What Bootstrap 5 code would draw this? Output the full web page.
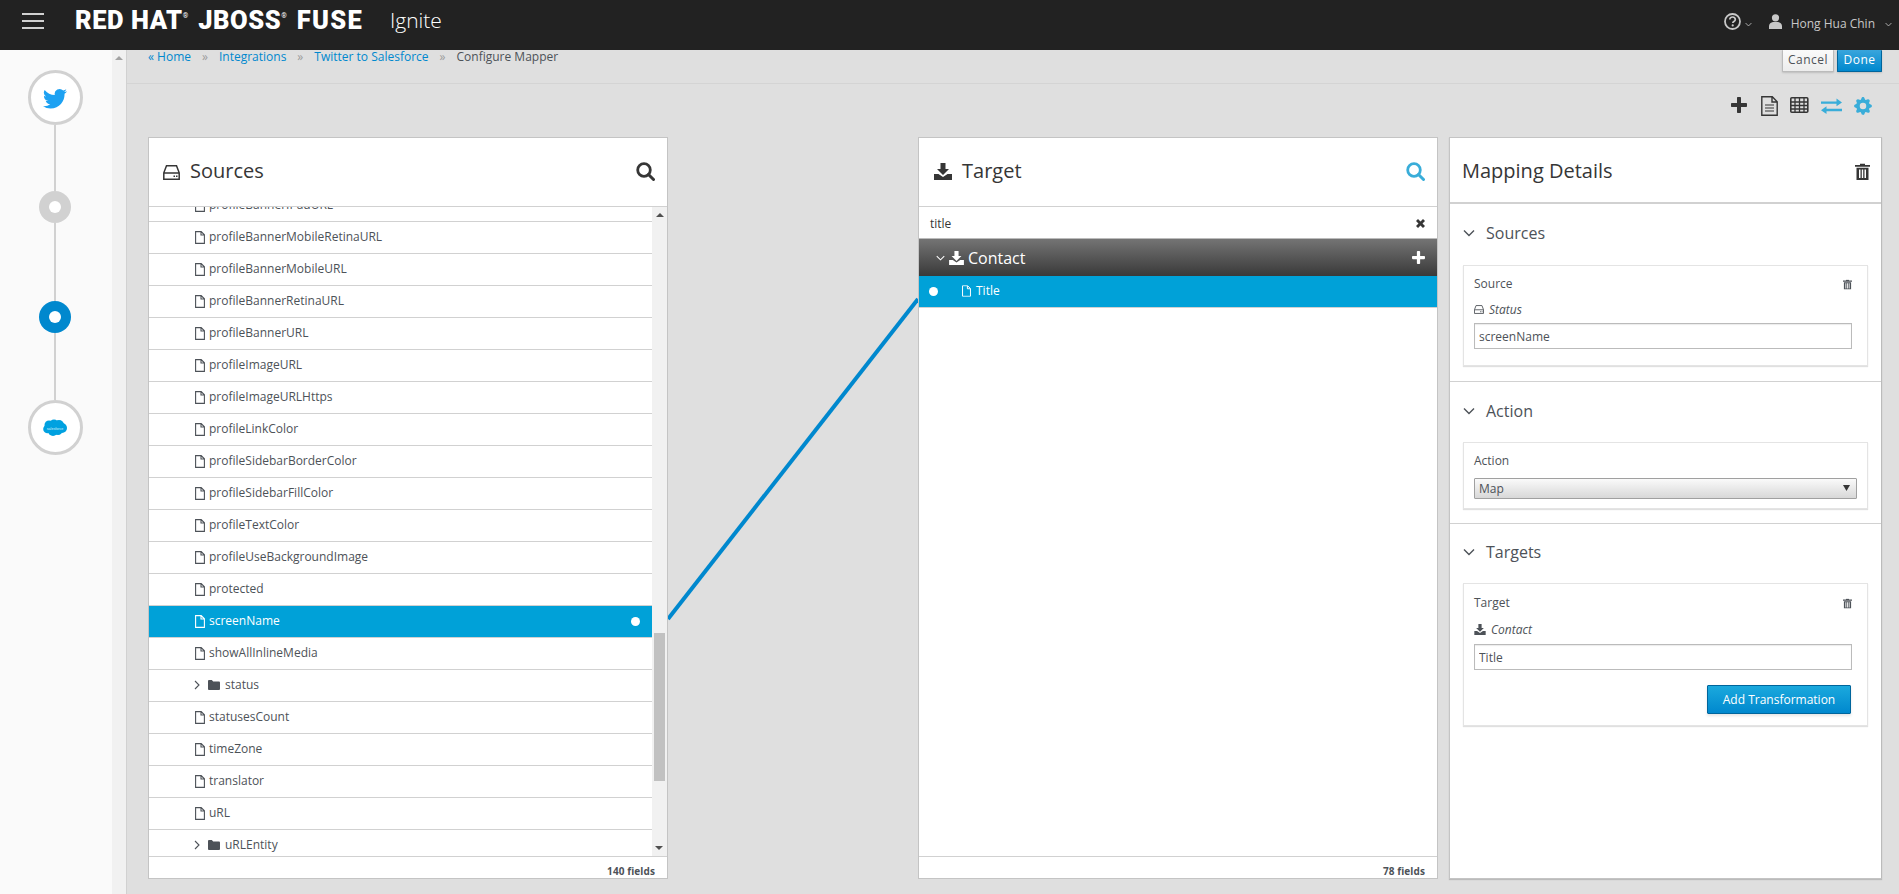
<!DOCTYPE html>
<html lang="en">
<head>
    <meta charset="UTF-8">
    <title>Configure Mapper</title>
    <link href="https://cdn.jsdelivr.net/npm/bootstrap@5.3.0/dist/css/bootstrap.min.css" rel="stylesheet">
    <style>
        body { height: 100vh; overflow: hidden; background: #dfdfdf; color: #363636; font-family: "Open Sans", "Liberation Sans", sans-serif; font-size: 12px; }
        svg { display: block; flex: none; }
        .fuse-nav { height: 50px; flex: none; background: #222; padding: 0; flex-wrap: nowrap; color: #d1d1d1; }
        .burger { width: 22px; height: 16px; margin-left: 22px; margin-top: -8px; border-top: 2px solid #d1d1d1; border-bottom: 2px solid #d1d1d1; position: relative; }
        .burger::after { content: ""; position: absolute; left: 0; right: 0; top: 5px; height: 2px; background: #d1d1d1; }
        .fuse-logo { margin-left: 31px; margin-top: -9px; width: 292px; font-family: Roboto, "Liberation Sans", sans-serif; font-weight: 900; font-size: 25.5px; letter-spacing: .55px; color: #fff; line-height: 1; white-space: nowrap; }
        .fuse-logo sup { font-size: 7px; font-weight: 400; top: -1.5em; margin-right: 3px; letter-spacing: 0; }
        .fuse-logo b { font-weight: 900; letter-spacing: 1.3px; }
        .fuse-product { margin-left: 23px; margin-top: -10px; font-size: 21px; font-weight: 300; color: #fff; line-height: 1; }
        .nav-tools { margin-left: auto; margin-top: -8px; font-size: 12px; color: #c8c8c8; }
        .nav-low { margin-top: 6px; }
        .step-rail { width: 112px; flex: none; background: #fafafa; padding: 20px 2px 0 0; }
        .step-big { width: 55px; height: 55px; border: 3px solid #d1d1d1; border-radius: 50%; background: #fff; }
        .step-small { width: 32px; height: 32px; border-radius: 50%; background: #d1d1d1; }
        .step-small.current { background: #0088ce; }
        .step-small i { width: 12px; height: 12px; border-radius: 50%; background: #fff; }
        .step-link { width: 2px; background: #d1d1d1; }
        .rail-bar { width: 15px; flex: none; background: #f1f1f1; border-right: 1px solid #d1d1d1; padding-top: 6px; }
        .tri-up { width: 0; height: 0; margin: 0 auto; border: 4px solid transparent; border-top: 0; border-bottom: 4px solid #a3a3a3; }
        .tri-down { width: 0; height: 0; margin: 0 auto; border: 4px solid transparent; border-bottom: 0; border-top: 4px solid #505050; }
        .mapper-main { min-width: 0; }
        .crumb-row { height: 34px; flex: none; padding: 0 17px 0 21px; border-bottom: 1px solid #d4d4d4; }
        .crumb-row .breadcrumb { --bs-breadcrumb-divider: "»"; --bs-breadcrumb-item-padding-x: 11px; --bs-breadcrumb-margin-bottom: 0; line-height: 14px; font-size: 12px; }
        .crumb-row a { color: #0088ce; text-decoration: none; }
        .crumb-row .breadcrumb-item.active { color: #4d5258; }
        .breadcrumb-item + .breadcrumb-item::before { color: #9c9c9c; }
        .btn-cancel, .btn-done, .btn-transform { border-radius: 1px; font-size: 12px; line-height: 1; padding: 0; }
        .btn-cancel { width: 52px; height: 22px; padding-bottom: 2px; background: linear-gradient(#fafafa, #ededed); color: #4d5258; border: 1px solid #bbb; border-top: 0; letter-spacing: .5px; box-shadow: 0 1px 2px rgba(0,0,0,.15); }
        .btn-done { width: 45px; height: 22px; padding-bottom: 2px; margin-left: 3px; background: linear-gradient(#39a5dc, #0088ce); color: #fff; border: 1px solid #00659c; border-top: 0; letter-spacing: .5px; box-shadow: 0 1px 2px rgba(0,0,0,.15); }
        .mapper-tools { height: 53px; flex: none; padding: 12px 27px 0 0; gap: 12px; color: #363636; }
        .tool-on { color: #39add9; }
        .panels { height: 742px; flex: none; padding-left: 21px; }
        .map-panel { border: 1px solid #c4c4c4; border-radius: 0; background: #fff; min-height: 0; }
        .panel-src, .panel-tgt { width: 520px; flex: none; }
        .panel-tgt { margin-right: 11px; }
        .panel-gap { width: 250px; flex: none; }
        .panel-map { width: 433px; flex: none; box-shadow: 0 1px 1px #bbb; border-right-color: #bbb; }
        .panel-head { height: 69px; flex: none; padding: 0 12px 2px 14px; border-bottom: 1px solid #d1d1d1; }
        .panel-head h2 { margin: 0; font-size: 20px; font-weight: 400; color: #363636; line-height: 1; font-family: inherit; }
        .field-wrap { min-height: 0; }
        .field-list { border-radius: 0; overflow: hidden; min-width: 0; }
        .field-row { height: 32px; flex: none; padding: 0 12px 1px 46px; border: 0; border-bottom: 1px solid #d1d1d1; border-radius: 0; color: #4d5258; font-size: 12px; line-height: 1; }
        .field-row:first-child { margin-top: -17px; }
        .field-row.picked { background: #00a1d8; color: #fff; border-bottom-color: #d1d1d1; }
        .field-dot { width: 9px; height: 9px; border-radius: 50%; background: #fff; }
        .chev-r { width: 6px; margin-left: -1px; margin-right: 8px; }
        .list-bar { width: 15px; flex: none; background: #f1f1f1; padding-top: 6px; position: relative; }
        .list-thumb { position: absolute; left: 2px; right: 2px; top: 426px; height: 148px; background: #c1c1c1; }
        .list-bar .tri-down { position: absolute; left: 3px; bottom: 6px; }
        .panel-foot { height: 22px; flex: none; border-top: 1px solid #d1d1d1; padding-right: 12px; font-size: 10px; font-weight: 700; letter-spacing: .1px; color: #4d5258; line-height: 28px; text-align: right; }
        .search-row { height: 32px; flex: none; padding: 2px 12px 0 11px; border-bottom: 1px solid #bbb; color: #363636; }
        .doc-head { height: 37px; flex: none; padding: 0 12px 0 17px; background: linear-gradient(#747474, #393939); color: #fff; font-size: 16px; line-height: 1; }
        .title-row { height: 32px; flex: none; padding: 0 0 1px 10px; background: #00a1d8; color: #fff; border-bottom: 1px solid #d1d1d1; }
        .title-row .field-dot { margin-right: 24px; }
        .map-sect { padding: 0 13px; border-bottom: 1px solid #d1d1d1; }
        .map-sect.last { border: 0; }
        .sect-title { font-size: 16px; color: #4d5258; line-height: 1; gap: 11px; padding-bottom: 3px; }
        .map-box { border: 1px solid #e4e4e4; box-shadow: 0 1px 1px rgba(0,0,0,.12); padding: 0 15px 0 10px; font-size: 12px; color: #4d5258; }
        .map-input { width: 378px; height: 26px; border: 1px solid #bbb; border-radius: 0; padding: 0 4px; font-size: 12px; color: #4d5258; box-shadow: inset 0 1px 1px rgba(0,0,0,.08); }
        .map-select { width: 383px; height: 21px; padding: 0 4px; font-size: 12px; line-height: 19px; color: #4d5258; border: 1px solid #a0a0a0; border-radius: 1px; background-color: #eee; background-image: url("data:image/svg+xml,%3Csvg xmlns='http://www.w3.org/2000/svg' width='7' height='6'%3E%3Cpath d='M0 0h7L3.5 6z' fill='%23363636'/%3E%3C/svg%3E"), linear-gradient(#fafafa, #d8d8d8); background-repeat: no-repeat; background-position: right 6px top 6px, 0 0; background-size: 7px 6px, auto; }
        .btn-transform { width: 144px; height: 29px; background: linear-gradient(#1ba9dd, #0088ce); color: #fff; border: 1px solid #00659c; box-shadow: 0 2px 3px rgba(0,0,0,.1); }
        .box-sub { height: 15px; gap: 5px; font-style: italic; margin-bottom: 7px; }
    </style>
</head>
<body class="d-flex flex-column">

<svg width="0" height="0" class="position-absolute">
    <symbol id="i-file" viewBox="0 0 10 13"><path d="M.6.6h5.6l3.2 3.2v8.6H.6z M6 .8v3.2h3.2" fill="none" stroke="currentColor" stroke-width="1.1"/></symbol>
    <symbol id="i-folder" viewBox="0 0 12 10"><path d="M0 1.2C0 .5.5 0 1.2 0h2.6l1.4 1.5h5.6c.7 0 1.2.5 1.2 1.2v6c0 .7-.5 1.3-1.2 1.3H1.2C.5 10 0 9.400 0 8.700z" fill="currentColor"/></symbol>
    <symbol id="i-hdd" viewBox="0 0 17 15"><path d="M3.500.8h10l2.700 7v6.400H.8V7.800zM.8 8h15.400" fill="none" stroke="currentColor" stroke-width="1.500"/><path d="M10.500 10.500h1.500v1.500h-1.500zM13 10.500h1.500v1.500H13z" fill="currentColor"/></symbol>
    <symbol id="i-down" viewBox="0 0 18 17"><path d="M6.500 0h5v6h3.500L9 12 3 6h3.500zM0 11h4.500L9 14l4.500-3H18v6H0z" fill="currentColor"/></symbol>
    <symbol id="i-search" viewBox="0 0 19 19"><circle cx="8" cy="8" r="6.300" fill="none" stroke="currentColor" stroke-width="2.800"/><path d="M12.500 12.500l5 5" stroke="currentColor" stroke-width="3" stroke-linecap="round"/></symbol>
    <symbol id="i-plus" viewBox="0 0 16 16"><path d="M6 1c0-.6.400-1 1-1h2c.6 0 1 .4 1 1v5h5c.6 0 1 .4 1 1v2c0 .6-.4 1-1 1h-5v5c0 .6-.4 1-1 1H7c-.6 0-1-.4-1-1v-5H1c-.6 0-1-.4-1-1V7c0-.6.4-1 1-1h5z" fill="currentColor"/></symbol>
    <symbol id="i-x" viewBox="0 0 9 9"><path d="M2 0l2.500 2.500L7 0l2 2-2.500 2.500L9 7 7 9 4.500 6.500 2 9 0 7l2.500-2.500L0 2z" fill="currentColor"/></symbol>
    <symbol id="i-trash" viewBox="0 0 15 17"><path d="M5 2V.7h5V2h5v1.800H0V2z" fill="currentColor"/><path d="M1.500 4.800h12V17h-12zM4 6.500v8.500h1.500V6.500zM6.800 6.500v8.500h1.400V6.500zM9.500 6.500v8.500H11V6.500z" fill="currentColor" fill-rule="evenodd"/></symbol>
    <symbol id="i-chev" viewBox="0 0 12 8"><path d="M1 1.500l5 5 5-5" fill="none" stroke="currentColor" stroke-width="1.400"/></symbol>
</svg>

<nav class="navbar fuse-nav">
    <div class="burger"></div>
    <div class="fuse-logo">RED HAT<sup>®</sup> JBOSS<sup>®</sup> <b>FUSE</b></div>
    <div class="fuse-product">Ignite</div>
    <div class="nav-tools d-flex align-items-center">
        <svg width="17" height="17" viewBox="0 0 17 17"><circle cx="8.500" cy="8.500" r="7.500" fill="none" stroke="currentColor" stroke-width="1.800"/><path d="M5.800 6.500c0-3.500 5.500-3.200 5.500 0 0 2-2.500 2-2.500 3.500" fill="none" stroke="currentColor" stroke-width="1.700"/><circle cx="8.700" cy="12.400" r="1.100" fill="currentColor"/></svg>
        <svg class="ms-1 nav-low" width="7" height="5" viewBox="0 0 12 8"><use href="#i-chev"/></svg>
        <svg style="margin-left:17px" width="13" height="15" viewBox="0 0 13 15"><circle cx="6.500" cy="3.800" r="3.600" fill="currentColor"/><path d="M0 15v-3c0-2.500 2-3.500 4-4h5c2 .5 4 1.500 4 4v3z" fill="currentColor"/></svg>
        <span class="nav-low" style="margin-left:9px">Hong Hua Chin</span>
        <svg class="nav-low" style="margin-left:10px;margin-right:7px" width="7" height="5" viewBox="0 0 12 8"><use href="#i-chev"/></svg>
    </div>
</nav>

<div class="d-flex flex-grow-1" style="min-height:0">
    <aside class="step-rail d-flex flex-column align-items-center">
        <div class="step-big d-flex align-items-center justify-content-center">
            <svg width="24" height="24" viewBox="0 0 16 16"><path fill="#1da1f2" d="M5.026 15c6.038 0 9.341-5.003 9.341-9.334 0-.14 0-.282-.006-.422A6.685 6.685 0 0 0 16 3.542a6.658 6.658 0 0 1-1.889.518 3.301 3.301 0 0 0 1.447-1.817 6.533 6.533 0 0 1-2.087.793A3.286 3.286 0 0 0 7.875 6.03a9.325 9.325 0 0 1-6.767-3.429 3.289 3.289 0 0 0 1.018 4.382A3.323 3.323 0 0 1 .64 6.575v.045a3.288 3.288 0 0 0 2.632 3.218 3.203 3.203 0 0 1-.865.115 3.23 3.23 0 0 1-.614-.057 3.283 3.283 0 0 0 3.067 2.277A6.588 6.588 0 0 1 .78 13.58a6.32 6.32 0 0 1-.78-.045A9.344 9.344 0 0 0 5.026 15z"/></svg>
        </div>
        <div class="step-link" style="height:66px"></div>
        <div class="step-small d-flex align-items-center justify-content-center"><i></i></div>
        <div class="step-link" style="height:78px"></div>
        <div class="step-small current d-flex align-items-center justify-content-center"><i></i></div>
        <div class="step-link" style="height:67px"></div>
        <div class="step-big d-flex align-items-center justify-content-center">
            <svg width="24" height="18" viewBox="0 0 24 18"><g fill="#00a1e0"><circle cx="6" cy="6" r="4.500"/><circle cx="11" cy="5" r="4.500"/><circle cx="16" cy="6" r="5"/><circle cx="19" cy="9" r="5"/><circle cx="4.500" cy="10" r="4.300"/><circle cx="10" cy="12" r="5"/><circle cx="15" cy="11.500" r="4.500"/></g><text x="12" y="10.500" text-anchor="middle" font-size="3.600" fill="#d5f1fb" font-family="Liberation Sans, sans-serif">salesforce</text></svg>
        </div>
    </aside>
    <div class="rail-bar"><div class="tri-up"></div></div>

    <main class="mapper-main flex-grow-1 d-flex flex-column">
        <div class="crumb-row d-flex justify-content-between align-items-start">
            <ol class="breadcrumb">
                <li class="breadcrumb-item"><a href="#">« Home</a></li>
                <li class="breadcrumb-item"><a href="#">Integrations</a></li>
                <li class="breadcrumb-item"><a href="#">Twitter to Salesforce</a></li>
                <li class="breadcrumb-item active">Configure Mapper</li>
            </ol>
            <div class="d-flex">
                <button class="btn btn-cancel">Cancel</button>
                <button class="btn btn-done">Done</button>
            </div>
        </div>

        <div class="mapper-tools d-flex justify-content-end align-items-start">
            <svg style="margin-right:2px" width="16" height="20" viewBox="0 0 16 20"><use href="#i-plus" y="1" width="16" height="16"/></svg>
            <svg width="17" height="20" viewBox="0 0 17 20"><path d="M.8.8h10.500l4.900 4.900v13.500H.8zM11 1v5h5" fill="none" stroke="currentColor" stroke-width="1.400"/><path d="M4 9h9M4 12h9M4 15h9" stroke="currentColor" stroke-width="1.200"/></svg>
            <svg width="19" height="20" viewBox="0 0 19 20"><rect x=".8" y="1.800" width="17" height="14.400" rx="1" fill="none" stroke="currentColor" stroke-width="1.600"/><path d="M1 6h17M1 9.500h17M1 13h17M5 2v14M9.500 2v14M14 2v14" stroke="currentColor" stroke-width="1.300"/></svg>
            <svg class="tool-on" width="21" height="20" viewBox="0 0 21 20"><path d="M0 5.500h15.500V2.500L21 6.500l-5.500 3.700V7.800H0zM21 12.800H5.500v-2.500L0 14.300 5.500 18v-2.800H21z" fill="currentColor"/></svg>
            <svg class="tool-on" width="18" height="20" viewBox="0 0 16 18"><path transform="translate(0 1)" fill="currentColor" d="M9.405 1.050c-.413-1.400-2.397-1.400-2.810 0l-.1.340a1.464 1.464 0 0 1-2.105.872l-.31-.17c-1.283-.698-2.686.705-1.987 1.987l.169.311c.446.820.023 1.841-.872 2.105l-.34.1c-1.400.413-1.400 2.397 0 2.810l.34.1a1.464 1.464 0 0 1 .872 2.105l-.17.31c-.698 1.283.705 2.686 1.987 1.987l.311-.169a1.464 1.464 0 0 1 2.105.872l.1.340c.413 1.400 2.397 1.400 2.810 0l.1-.340a1.464 1.464 0 0 1 2.105-.872l.31.170c1.283.698 2.686-.705 1.987-1.987l-.169-.311a1.464 1.464 0 0 1 .872-2.105l.340-.1c1.400-.413 1.400-2.397 0-2.810l-.340-.1a1.464 1.464 0 0 1-.872-2.105l.170-.31c.698-1.283-.705-2.686-1.987-1.987l-.311.169a1.464 1.464 0 0 1-2.105-.872l-.1-.340zM8 10.930a2.929 2.929 0 1 1 0-5.860 2.929 2.929 0 0 1 0 5.858z"/></svg>
        </div>

        <div class="panels d-flex">
            <section class="card map-panel panel-src">
                <div class="panel-head d-flex align-items-center">
                    <svg class="me-2" width="17" height="15" style="margin-top:2px"><use href="#i-hdd"/></svg>
                    <h2 style="margin-left:2px">Sources</h2>
                    <svg class="ms-auto" width="19" height="19"><use href="#i-search"/></svg>
                </div>
                <div class="field-wrap d-flex flex-grow-1">
                    <div class="list-group field-list flex-grow-1">
                        <div class="list-group-item field-row d-flex align-items-center gap-1"><svg width="10" height="13"><use href="#i-file"/></svg>profileBannerIPadURL</div>
                        <div class="list-group-item field-row d-flex align-items-center gap-1"><svg width="10" height="13"><use href="#i-file"/></svg>profileBannerMobileRetinaURL</div>
                        <div class="list-group-item field-row d-flex align-items-center gap-1"><svg width="10" height="13"><use href="#i-file"/></svg>profileBannerMobileURL</div>
                        <div class="list-group-item field-row d-flex align-items-center gap-1"><svg width="10" height="13"><use href="#i-file"/></svg>profileBannerRetinaURL</div>
                        <div class="list-group-item field-row d-flex align-items-center gap-1"><svg width="10" height="13"><use href="#i-file"/></svg>profileBannerURL</div>
                        <div class="list-group-item field-row d-flex align-items-center gap-1"><svg width="10" height="13"><use href="#i-file"/></svg>profileImageURL</div>
                        <div class="list-group-item field-row d-flex align-items-center gap-1"><svg width="10" height="13"><use href="#i-file"/></svg>profileImageURLHttps</div>
                        <div class="list-group-item field-row d-flex align-items-center gap-1"><svg width="10" height="13"><use href="#i-file"/></svg>profileLinkColor</div>
                        <div class="list-group-item field-row d-flex align-items-center gap-1"><svg width="10" height="13"><use href="#i-file"/></svg>profileSidebarBorderColor</div>
                        <div class="list-group-item field-row d-flex align-items-center gap-1"><svg width="10" height="13"><use href="#i-file"/></svg>profileSidebarFillColor</div>
                        <div class="list-group-item field-row d-flex align-items-center gap-1"><svg width="10" height="13"><use href="#i-file"/></svg>profileTextColor</div>
                        <div class="list-group-item field-row d-flex align-items-center gap-1"><svg width="10" height="13"><use href="#i-file"/></svg>profileUseBackgroundImage</div>
                        <div class="list-group-item field-row d-flex align-items-center gap-1"><svg width="10" height="13"><use href="#i-file"/></svg>protected</div>
                        <div class="list-group-item field-row picked d-flex align-items-center gap-1"><svg width="10" height="13"><use href="#i-file"/></svg>screenName<span class="field-dot ms-auto"></span></div>
                        <div class="list-group-item field-row d-flex align-items-center gap-1"><svg width="10" height="13"><use href="#i-file"/></svg>showAllInlineMedia</div>
                        <div class="list-group-item field-row d-flex align-items-center"><svg class="chev-r" width="6" height="10" viewBox="0 0 6 10"><path d="M1 1l4 4-4 4" fill="none" stroke="currentColor" stroke-width="1.100"/></svg><svg width="12" height="10" style="margin-right:5px"><use href="#i-folder"/></svg>status</div>
                        <div class="list-group-item field-row d-flex align-items-center gap-1"><svg width="10" height="13"><use href="#i-file"/></svg>statusesCount</div>
                        <div class="list-group-item field-row d-flex align-items-center gap-1"><svg width="10" height="13"><use href="#i-file"/></svg>timeZone</div>
                        <div class="list-group-item field-row d-flex align-items-center gap-1"><svg width="10" height="13"><use href="#i-file"/></svg>translator</div>
                        <div class="list-group-item field-row d-flex align-items-center gap-1"><svg width="10" height="13"><use href="#i-file"/></svg>uRL</div>
                        <div class="list-group-item field-row d-flex align-items-center"><svg class="chev-r" width="6" height="10" viewBox="0 0 6 10"><path d="M1 1l4 4-4 4" fill="none" stroke="currentColor" stroke-width="1.100"/></svg><svg width="12" height="10" style="margin-right:5px"><use href="#i-folder"/></svg>uRLEntity</div>
                    </div>
                    <div class="list-bar"><div class="tri-up" style="border-bottom-color:#505050"></div><div class="list-thumb"></div><div class="tri-down"></div></div>
                </div>
                <div class="panel-foot">140 fields</div>
            </section>

            <div class="panel-gap">
                <svg width="250" height="742" viewBox="0 0 250 742"><path d="M0 482L250 162" stroke="#0088ce" stroke-width="4" fill="none"/></svg>
            </div>

            <section class="card map-panel panel-tgt">
                <div class="panel-head d-flex align-items-center" style="padding-left:15px">
                    <svg class="me-2" width="18" height="17"><use href="#i-down"/></svg>
                    <h2 style="margin-left:2px">Target</h2>
                    <svg class="ms-auto tool-on" width="19" height="19"><use href="#i-search"/></svg>
                </div>
                <div class="search-row d-flex align-items-center justify-content-between">
                    <span>title</span>
                    <svg width="9" height="9"><use href="#i-x"/></svg>
                </div>
                <div class="doc-head d-flex align-items-center">
                    <svg width="9" height="6" viewBox="0 0 12 8"><use href="#i-chev"/></svg>
                    <svg class="ms-1" width="15" height="14" viewBox="0 0 18 17"><use href="#i-down"/></svg>
                    <span class="ms-1">Contact</span>
                    <svg class="ms-auto" width="13" height="13" viewBox="0 0 16 16"><use href="#i-plus"/></svg>
                </div>
                <div class="title-row d-flex align-items-center">
                    <span class="field-dot"></span>
                    <svg width="9" height="12" viewBox="0 0 10 13"><use href="#i-file"/></svg>
                    <span style="margin-left:5px">Title</span>
                </div>
                <div class="flex-grow-1"></div>
                <div class="panel-foot">78 fields</div>
            </section>

            <section class="card map-panel panel-map">
                <div class="panel-head d-flex align-items-center" style="height:66px;border-bottom:2px solid #d1d1d1;padding:1px 11px 0 12px">
                    <h2>Mapping Details</h2>
                    <svg class="ms-auto" width="15" height="17" style="margin-top:2px"><use href="#i-trash"/></svg>
                </div>
                <div class="map-sect" style="height:178px">
                    <div class="sect-title d-flex align-items-center" style="height:61px"><svg width="12" height="8"><use href="#i-chev"/></svg>Sources</div>
                    <div class="map-box" style="height:101px">
                        <div class="d-flex align-items-center justify-content-between" style="height:36px">Source<svg width="9" height="11" viewBox="0 0 15 17"><use href="#i-trash"/></svg></div>
                        <div class="box-sub d-flex align-items-center" style="margin-bottom:6px"><svg width="10" height="9" viewBox="0 0 17 15"><use href="#i-hdd"/></svg>Status</div>
                        <input class="form-control map-input" value="screenName" readonly>
                    </div>
                </div>
                <div class="map-sect" style="height:142px">
                    <div class="sect-title d-flex align-items-center" style="height:60px"><svg width="12" height="8"><use href="#i-chev"/></svg>Action</div>
                    <div class="map-box" style="height:67px">
                        <div class="d-flex align-items-center" style="height:35px">Action</div>
                        <select class="form-select map-select"><option>Map</option></select>
                    </div>
                </div>
                <div class="map-sect last">
                    <div class="sect-title d-flex align-items-center" style="height:59px"><svg width="12" height="8"><use href="#i-chev"/></svg>Targets</div>
                    <div class="map-box" style="height:143px">
                        <div class="d-flex align-items-center justify-content-between" style="height:38px">Target<svg width="9" height="11" viewBox="0 0 15 17"><use href="#i-trash"/></svg></div>
                        <div class="box-sub d-flex align-items-center"><svg width="12" height="11" viewBox="0 0 18 17"><use href="#i-down"/></svg>Contact</div>
                        <input class="form-control map-input" value="Title" readonly>
                        <div class="d-flex justify-content-end" style="margin-top:15px;padding-right:1px"><button class="btn btn-transform">Add Transformation</button></div>
                    </div>
                </div>
            </section>
        </div>
    </main>
</div>

<script src="https://cdn.jsdelivr.net/npm/bootstrap@5.3.0/dist/js/bootstrap.bundle.min.js"></script>
</body>
</html>
